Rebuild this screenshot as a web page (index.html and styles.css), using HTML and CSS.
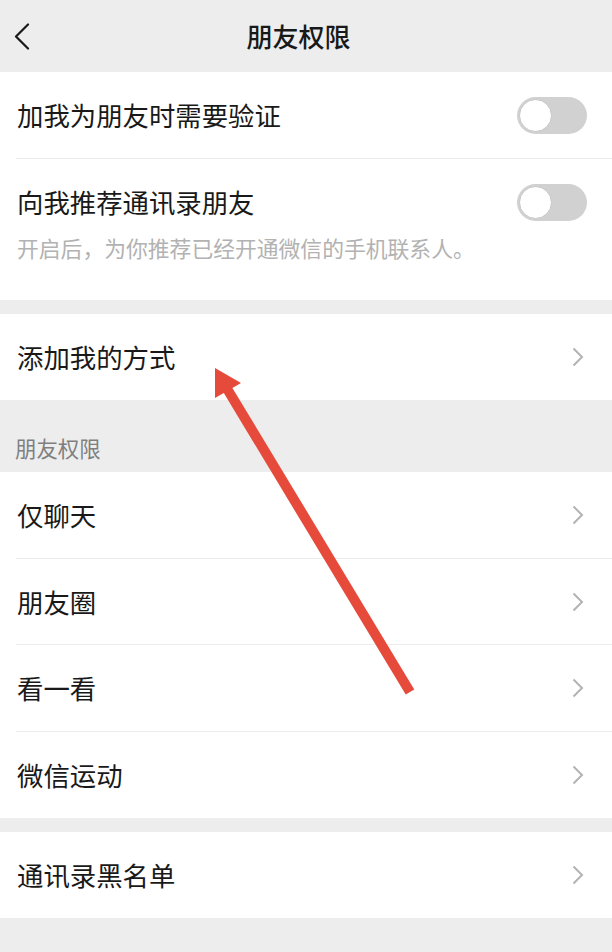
FILE: index.html
```html
<!DOCTYPE html>
<html lang="zh-CN">
<head>
<meta charset="utf-8">
<title>朋友权限</title>
<link rel="stylesheet" href="styles.css">
</head>
<body>
<div class="page">
  <header class="nav">
    <svg class="back" width="16" height="27" viewBox="0 0 16 27"><polyline points="14,1.5 2,13.5 14,25.5" fill="none" stroke="#1a1a1a" stroke-width="2.2" stroke-linecap="round" stroke-linejoin="round"/></svg>
    <div class="nav-title">朋友权限</div>
  </header>

  <section class="group">
    <div class="row">
      <span class="label">加我为朋友时需要验证</span>
      <span class="switch"><span class="knob"></span></span>
    </div>
    <div class="divider"></div>
    <div class="row-tall">
      <div class="row-line">
        <span class="label">向我推荐通讯录朋友</span>
        <span class="switch"><span class="knob"></span></span>
      </div>
      <div class="desc">开启后，为你推荐已经开通微信的手机联系人。</div>
    </div>
  </section>

  <section class="group gap">
    <div class="row">
      <span class="label">添加我的方式</span>
      <svg class="chev" width="12" height="20" viewBox="0 0 12 20"><polyline points="1.5,1.5 10,10 1.5,18.5" fill="none" stroke="#b3b3b3" stroke-width="2"/></svg>
    </div>
  </section>

  <div class="section-title">朋友权限</div>

  <section class="group">
    <div class="row row-list">
      <span class="label">仅聊天</span>
      <svg class="chev" width="12" height="20" viewBox="0 0 12 20"><polyline points="1.5,1.5 10,10 1.5,18.5" fill="none" stroke="#b3b3b3" stroke-width="2"/></svg>
    </div>
    <div class="divider"></div>
    <div class="row row-list">
      <span class="label">朋友圈</span>
      <svg class="chev" width="12" height="20" viewBox="0 0 12 20"><polyline points="1.5,1.5 10,10 1.5,18.5" fill="none" stroke="#b3b3b3" stroke-width="2"/></svg>
    </div>
    <div class="divider"></div>
    <div class="row row-list">
      <span class="label">看一看</span>
      <svg class="chev" width="12" height="20" viewBox="0 0 12 20"><polyline points="1.5,1.5 10,10 1.5,18.5" fill="none" stroke="#b3b3b3" stroke-width="2"/></svg>
    </div>
    <div class="divider"></div>
    <div class="row row-list">
      <span class="label">微信运动</span>
      <svg class="chev" width="12" height="20" viewBox="0 0 12 20"><polyline points="1.5,1.5 10,10 1.5,18.5" fill="none" stroke="#b3b3b3" stroke-width="2"/></svg>
    </div>
  </section>

  <section class="group gap">
    <div class="row">
      <span class="label">通讯录黑名单</span>
      <svg class="chev" width="12" height="20" viewBox="0 0 12 20"><polyline points="1.5,1.5 10,10 1.5,18.5" fill="none" stroke="#b3b3b3" stroke-width="2"/></svg>
    </div>
  </section>

  <svg class="arrow" width="612" height="952" viewBox="0 0 612 952">
    <line x1="226" y1="387" x2="410" y2="692" stroke="#e64a3b" stroke-width="10"/>
    <polygon points="215,368 241,383 215,398" fill="#e64a3b"/>
  </svg>
</div>
</body>
</html>
```

FILE: styles.css
```css
html, body {
  margin: 0;
  padding: 0;
  background: #ededed;
}

body {
  font-family: "Noto Sans CJK SC", "Noto Sans", sans-serif;
  color: #191919;
}

.page {
  position: relative;
  width: 612px;
  min-height: 952px;
  overflow: hidden;
}

.nav {
  height: 72px;
  display: flex;
  align-items: center;
  padding-left: 14px;
  padding-right: 45px;
  background: #ededed;
}

.back {
  flex: none;
  display: block;
}

.nav-title {
  flex: 1;
  text-align: center;
  font-size: 26px;
  font-weight: 500;
  line-height: 30px;
  color: #191919;
}

.group {
  background: #ffffff;
}

.gap {
  margin-top: 14px;
}

.row {
  height: 86px;
  display: flex;
  align-items: center;
  justify-content: space-between;
  padding-left: 17px;
  padding-right: 25px;
}

.row-list {
  height: 85.7px;
}

.row .chev {
  margin-right: 3px;
}

.label {
  font-size: 26.4px;
  line-height: 30px;
}

.divider {
  height: 1px;
  margin-left: 16px;
  background: #ececec;
}

.row-tall {
  padding: 24px 25px 37px 17px;
}

.row-line {
  height: 38px;
  display: flex;
  align-items: center;
  justify-content: space-between;
}

.desc {
  margin-top: 12px;
  font-size: 21.8px;
  line-height: 30px;
  color: #b2b2b2;
}

.switch {
  position: relative;
  width: 70px;
  height: 37px;
  border-radius: 19px;
  background: #d1d1d1;
  flex: none;
}

.knob {
  position: absolute;
  left: 2px;
  top: 2px;
  width: 33px;
  height: 33px;
  border-radius: 50%;
  background: #ffffff;
  box-sizing: border-box;
  border: 1px solid #c6c6c6;
}

.chev {
  display: block;
  flex: none;
}

.section-title {
  height: 72px;
  box-sizing: border-box;
  padding: 33px 0 9px 15px;
  font-size: 21.4px;
  line-height: 30px;
  color: #7f7f7f;
}

.arrow {
  position: absolute;
  left: 0;
  top: 0;
  pointer-events: none;
}
```
